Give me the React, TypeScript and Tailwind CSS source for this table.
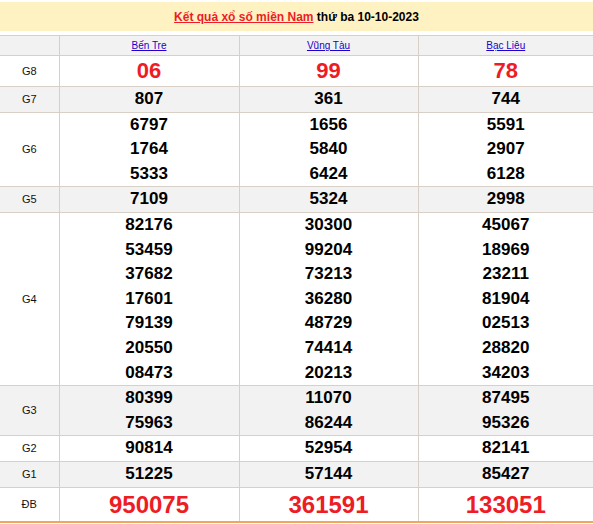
import React from 'react';

type Row = {
  label: string;
  values: string[][];
  shaded?: boolean;
  kind?: 'g8' | 'db';
};

const rows: Row[] = [
  { label: 'G8', values: [['06'], ['99'], ['78']], kind: 'g8' },
  { label: 'G7', values: [['807'], ['361'], ['744']], shaded: true },
  { label: 'G6', values: [['6797', '1764', '5333'], ['1656', '5840', '6424'], ['5591', '2907', '6128']] },
  { label: 'G5', values: [['7109'], ['5324'], ['2998']], shaded: true },
  {
    label: 'G4',
    values: [
      ['82176', '53459', '37682', '17601', '79139', '20550', '08473'],
      ['30300', '99204', '73213', '36280', '48729', '74414', '20213'],
      ['45067', '18969', '23211', '81904', '02513', '28820', '34203'],
    ],
  },
  { label: 'G3', values: [['80399', '75963'], ['11070', '86244'], ['87495', '95326']], shaded: true },
  { label: 'G2', values: [['90814'], ['52954'], ['82141']] },
  { label: 'G1', values: [['51225'], ['57144'], ['85427']], shaded: true },
  { label: 'ĐB', values: [['950075'], ['361591'], ['133051']], kind: 'db' },
];

const provinces = ['Bến Tre', 'Vũng Tàu', 'Bạc Liêu'];

function NumberCell({ nums, kind }: { nums: string[]; kind?: Row['kind'] }) {
  if (kind === 'g8') {
    return <div className="h-[30px] leading-[30px] text-[22px] font-bold text-[#ee1c25]">{nums[0]}</div>;
  }
  if (kind === 'db') {
    return <div className="h-[33px] leading-[33px] text-[24px] font-bold text-[#ee1c25]">{nums[0]}</div>;
  }
  return (
    <div>
      {nums.map((n) => (
        <div key={n} className="leading-[24.6px] text-[17px] font-bold text-black">
          {n}
        </div>
      ))}
    </div>
  );
}

export default function App() {
  return (
    <div className="w-[593px] bg-white pt-[2px] font-['Liberation_Sans',Arial,sans-serif]">
      <div className="h-[29px] bg-[#fff2c2] flex items-center justify-center text-[12px] font-bold">
        <a className="text-[#ee1c25] underline" href="#">Kết quả xổ số miền Nam</a>
        <span className="text-black">&nbsp;thứ ba 10-10-2023</span>
      </div>

      <table className="mt-[4px] w-full border-collapse text-center table-fixed">
        <colgroup>
          <col className="w-[59px]" />
          <col className="w-[180px]" />
          <col className="w-[179px]" />
          <col />
        </colgroup>
        <thead>
          <tr className="bg-[#f2f2f2] h-[20px]">
            <th className="border-y border-[#d8d0c6] font-normal"></th>
            {provinces.map((p) => (
              <th key={p} className="border border-r-0 border-[#d8d0c6] font-normal text-[10px]">
                <a href="#" className="text-[#2200cc] underline">{p}</a>
              </th>
            ))}
          </tr>
        </thead>
        <tbody>
          {rows.map((r) => (
            <tr key={r.label} className={r.shaded ? 'bg-[#f2f2f2]' : 'bg-white'}>
              <td
                className={`border-t border-[#d8d0c6] text-[11px] text-[#111] p-0 ${
                  r.kind === 'db' ? 'border-b-2 border-b-[#f0a85a]' : 'border-b'
                }`}
              >
                {r.label}
              </td>
              {r.values.map((v, i) => (
                <td
                  key={i}
                  className={`border-t border-l border-[#d8d0c6] p-0 ${
                    r.kind === 'db' ? 'border-b-2 border-b-[#f0a85a]' : 'border-b'
                  }`}
                >
                  <NumberCell nums={v} kind={r.kind} />
                </td>
              ))}
            </tr>
          ))}
        </tbody>
      </table>
    </div>
  );
}
